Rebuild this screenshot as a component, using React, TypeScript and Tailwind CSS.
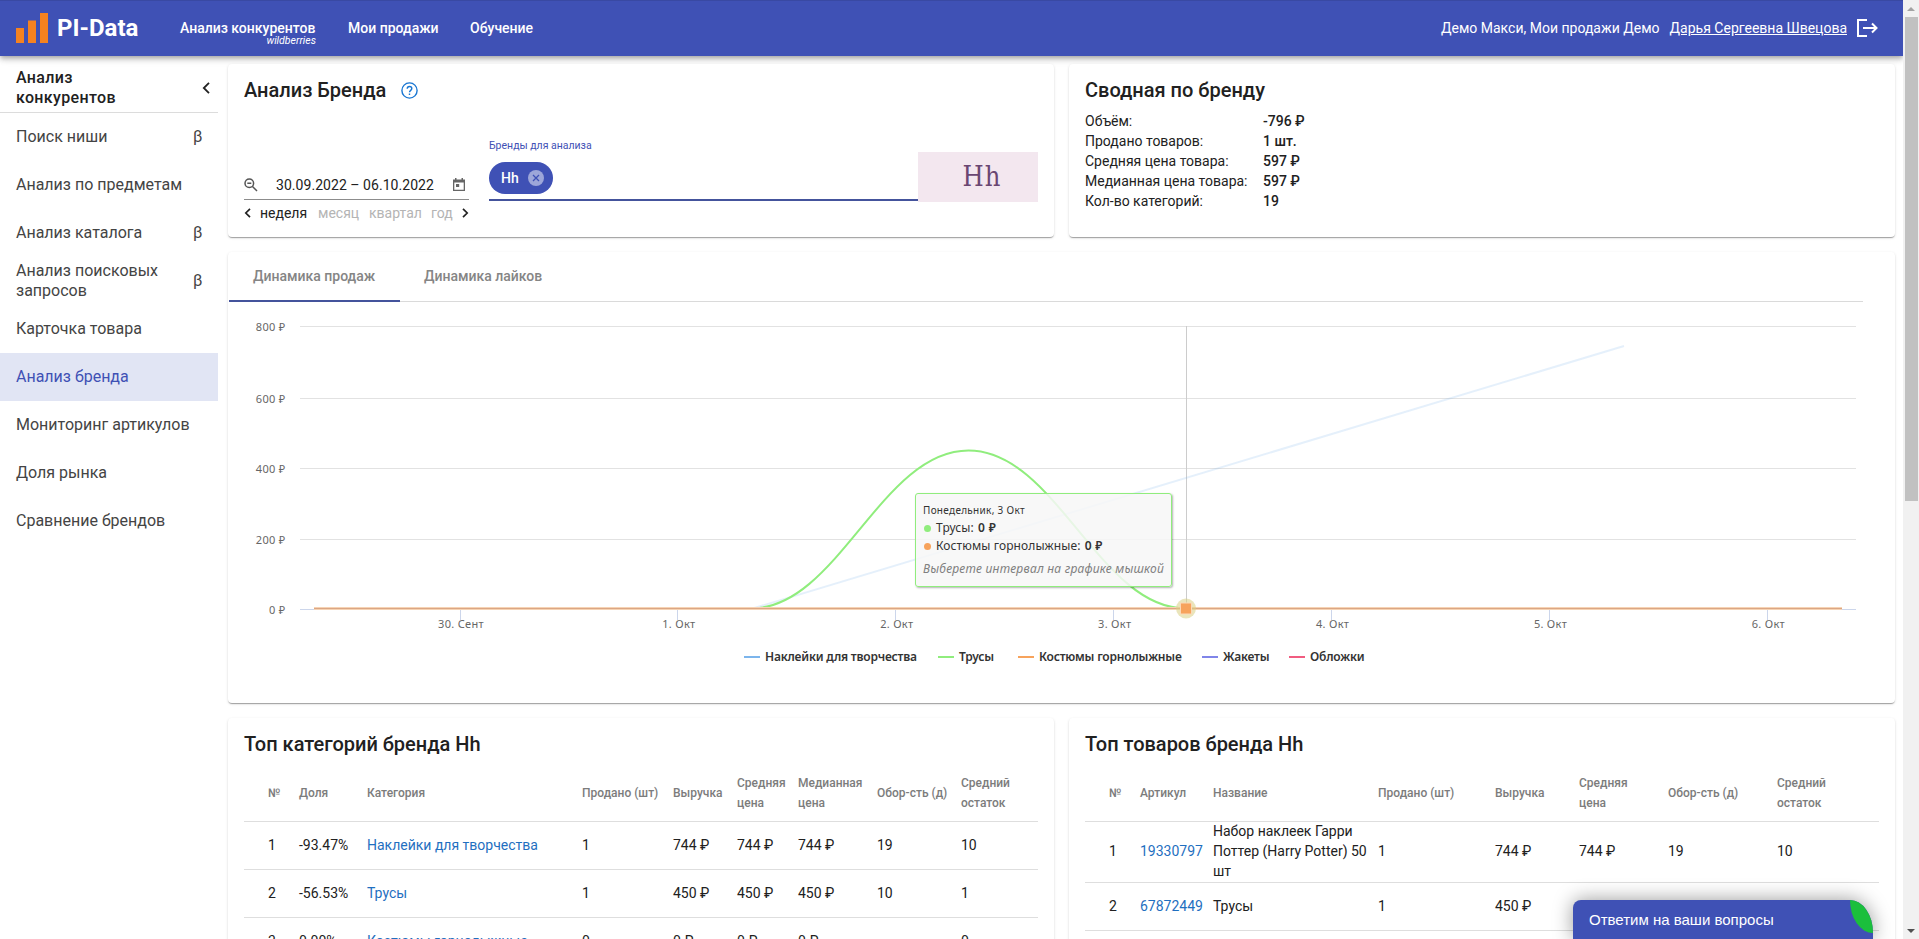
import React from "react";

const menu = [
  { title: "Поиск ниши", beta: true },
  { title: "Анализ по предметам" },
  { title: "Анализ каталога", beta: true },
  { title: "Анализ поисковых запросов", beta: true },
  { title: "Карточка товара" },
  { title: "Анализ бренда", active: true },
  { title: "Мониторинг артикулов" },
  { title: "Доля рынка" },
  { title: "Сравнение брендов" },
];

const summary = [
  ["Объём:", "-796 ₽"],
  ["Продано товаров:", "1 шт."],
  ["Средняя цена товара:", "597 ₽"],
  ["Медианная цена товара:", "597 ₽"],
  ["Кол-во категорий:", "19"],
];

const categoryHead = ["№", "Доля", "Категория", "Продано (шт)", "Выручка", "Средняя цена", "Медианная цена", "Обор-сть (д)", "Средний остаток"];
const categories = [
  ["1", "-93.47%", "Наклейки для творчества", "1", "744 ₽", "744 ₽", "744 ₽", "19", "10"],
  ["2", "-56.53%", "Трусы", "1", "450 ₽", "450 ₽", "450 ₽", "10", "1"],
  ["3", "0.00%", "Костюмы горнолыжные", "0", "0 ₽", "0 ₽", "0 ₽", "", "0"],
];

const goodsHead = ["№", "Артикул", "Название", "Продано (шт)", "Выручка", "Средняя цена", "Обор-сть (д)", "Средний остаток"];
const goods = [
  ["1", "19330797", "Набор наклеек Гарри Поттер (Harry Potter) 50 шт", "1", "744 ₽", "744 ₽", "19", "10"],
  ["2", "67872449", "Трусы", "1", "450 ₽", "", "", ""],
];

const legend = [
  { name: "Наклейки для творчества", color: "bg-[#7cb5ec]", width: "w-[194px]" },
  { name: "Трусы", color: "bg-[#90ed7d]", width: "w-[80px]" },
  { name: "Костюмы горнолыжные", color: "bg-[#f7a35c]", width: "w-[184px]" },
  { name: "Жакеты", color: "bg-[#8085e9]", width: "w-[87px]" },
  { name: "Обложки", color: "bg-[#f15c80]", width: "w-[76px]" },
];

const card =
  "bg-white rounded shadow-[0_2px_1px_-1px_rgba(0,0,0,0.2),0_1px_1px_0_rgba(0,0,0,0.14),0_1px_3px_0_rgba(0,0,0,0.12)]";

const Header = () => {
  return (
    <header className="flex h-14 items-center border-t border-[#3949a3] bg-[#3f51b5] pb-[2px] pl-4 pr-[25px] text-white shadow-[0_2px_4px_-1px_rgba(0,0,0,0.2),0_4px_5px_0_rgba(0,0,0,0.14),0_1px_10px_0_rgba(0,0,0,0.12)]">
      <svg width="32" height="30" viewBox="0 0 32 30" fill="#f58220">
        <path d="M0 15h8v15H0zM12 7.500h8V30h-8zM24 0h8v30h-8z" />
      </svg>
      <span className="ml-[9px] w-[123px] text-2xl font-bold">PI-Data</span>
      <nav className="flex text-sm font-medium">
        <a className="relative w-[168px] whitespace-nowrap">
          Анализ конкурентов
          <span className="absolute right-[32px] top-[15px] text-[10.5px] font-normal italic leading-4">wildberries</span>
        </a>
        <a className="w-[122px]">Мои продажи</a>
        <a>Обучение</a>
      </nav>
      <div className="ml-auto flex items-center text-sm">
        <span className="mr-[10px]">Демо Макси, Мои продажи Демо</span>
        <a className="mr-[10px] underline">Дарья Сергеевна Швецова</a>
        <svg width="21" height="18" viewBox="0 0 21 18" fill="none" stroke="#fff" strokeWidth="2">
          <path d="M10 1H1v16h9M6 9h13M15 4.500 19.500 9 15 13.500" />
        </svg>
      </div>
    </header>
  );
};

const Sidebar = () => {
  return (
    <aside className="w-[218px] shrink-0">
      <div className="flex h-[57px] items-center justify-between border-b border-[#dcdcdc] pl-4 pr-2 pt-[7px]">
        <h2 className="w-[120px] text-base font-medium leading-5 tracking-[0.35px]">Анализ конкурентов</h2>
        <svg width="8" height="12" viewBox="0 0 8 12" fill="none" stroke="#222" strokeWidth="1.800">
          <path d="M7 .8 1.800 6 7 11.200" />
        </svg>
      </div>
      {menu.map((item) => (
        <div
          key={item.title}
          className={
            item.active
              ? "flex h-12 items-center justify-between bg-[#e1e5f4] px-4 text-[#3f51b5]"
              : "flex h-12 items-center justify-between px-4 text-[#444]"
          }
        >
          <span className="text-base leading-5">{item.title}</span>
          {item.beta && <span className="w-[9px] text-base">β</span>}
        </div>
      ))}
    </aside>
  );
};

const Filters = () => {
  return (
    <section className={card + " h-[173px] w-[826px] px-4"}>
      <div className="flex h-[52px] items-center">
        <h1 className="w-[157px] whitespace-nowrap text-xl font-medium">Анализ Бренда</h1>
        <svg width="17" height="17" viewBox="0 0 17 17" fill="none" stroke="#1976d2" strokeWidth="1.400">
          <circle cx="8.500" cy="8.500" r="7.600" />
          <path d="M6.200 6.800C6.200 5.300 7.200 4.500 8.500 4.500s2.300.9 2.300 2.100c0 1.700-2.300 1.800-2.300 3.700M8.500 11.600v1.500" />
        </svg>
      </div>
      <div className="flex">
        <div className="mt-[54px] w-[225px]">
          <div className="flex h-[30px] items-center border-b border-[#8c8c8c]">
            <svg width="14" height="14" viewBox="0 0 14 14" fill="none" stroke="#555" strokeWidth="1.500">
              <circle cx="5.300" cy="5.300" r="4.300" />
              <path d="M8.500 8.500 13 13M3.300 5.300h4" />
            </svg>
            <span className="ml-[18px] w-[177px] text-sm tracking-[0.05px]">30.09.2022 – 06.10.2022</span>
            <svg width="12" height="13" viewBox="0 0 12 13" fill="#666">
              <path fillRule="evenodd" d="M2 0h1.500v1.500h5V0H10v1.500h2V13H0V1.500h2zM1.300 4.500v7.200h9.400V4.500z" />
              <path d="M3 6h3.200v3H3z" />
            </svg>
          </div>
          <div className="mt-[3px] flex h-5 items-center text-sm text-[#b4b4b4]">
            <svg width="7" height="10" viewBox="0 0 7 10" fill="none" stroke="#222" strokeWidth="1.700">
              <path d="M6 .8 1.800 5 6 9.200" />
            </svg>
            <span className="ml-[9px] w-[58px] text-[#222]">неделя</span>
            <span className="w-[51px]">месяц</span>
            <span className="w-[62px]">квартал</span>
            <span className="w-[31px]">год</span>
            <svg width="7" height="10" viewBox="0 0 7 10" fill="none" stroke="#222" strokeWidth="1.700">
              <path d="M1 .8 5.200 5 1 9.200" />
            </svg>
          </div>
        </div>
        <div className="ml-5 mt-[20px] h-[65px] w-[429px] border-b-2 border-[#44539c]">
          <label className="block h-[26px] text-[10.5px] leading-5 text-[#3f51b5]">Бренды для анализа</label>
          <div className="flex h-8 w-16 items-center justify-between rounded-full bg-[#3f51b5] pl-3 pr-[9px] text-sm font-medium text-white">
            Hh
            <svg width="16" height="16" viewBox="0 0 16 16">
              <circle cx="8" cy="8" r="8" fill="#9da6d9" />
              <path d="m5 5 6 6M11 5l-6 6" stroke="#3f51b5" strokeWidth="1.300" />
            </svg>
          </div>
        </div>
        <div className="mt-9 flex h-[50px] w-[120px] items-center justify-center bg-[#f3e7ef] pl-[8px] pt-px font-['DejaVu_Serif_Condensed','DejaVu_Serif',serif] text-[27px] tracking-[1px] text-[#6a4672]">
          <span>Hh</span>
        </div>
      </div>
    </section>
  );
};

const Summary = () => {
  return (
    <section className={card + " h-[173px] w-[826px] px-4"}>
      <h2 className="flex h-[47px] items-center pt-[5px] text-xl font-medium">Сводная по бренду</h2>
      {summary.map(([name, value]) => (
        <div key={name} className="flex text-sm leading-5">
          <span className="w-[178px]">{name}</span>
          <b className="font-medium">{value}</b>
        </div>
      ))}
    </section>
  );
};

const gridLines = [74.5, 146.5, 216.5, 287.5, 357.5];
const days = ["30. Сент", "1. Окт", "2. Окт", "3. Окт", "4. Окт", "5. Окт", "6. Окт"];

const Chart = () => {
  return (
    <section className={card + " relative h-[451px] w-[1667px]"}>
      <div className="ml-px flex h-[50px] w-[1634px] border-b border-[#dadada] text-sm font-medium text-[#858585]">
        <div className="-mb-px w-[171px] border-b-2 border-[#44539c] pl-6 leading-[48px]">Динамика продаж</div>
        <div className="pl-6 leading-[48px]">Динамика лайков</div>
      </div>
      {/* svg is drawn in the card's own coordinates */}
      <svg
        width="1667"
        height="400"
        viewBox="0 50 1667 400"
        className="block font-['Noto_Sans',sans-serif] text-[11px] tracking-[0.3px]"
        fill="none"
      >
        {gridLines.map((y, i) => (
          <g key={y}>
            <path d={`M72 ${y}H1628`} stroke={i === 4 ? "#ccd6eb" : "#e2e2e2"} />
            <text x="57.500" y={y + 4} textAnchor="end" fill="#666">
              {800 - i * 200} ₽
            </text>
          </g>
        ))}
        {days.map((day, i) => (
          <g key={day}>
            <path d={`M${Math.round(231.5 + i * 217.9) + 0.5} 358v10`} stroke="#ccd6eb" />
            <text x={233 + i * 217.9} y="376" textAnchor="middle" fill="#666">
              {day}
            </text>
          </g>
        ))}
        <path d="M958.500 74v284" stroke="#ccc" />
        <path d="M523 357 1396 94" stroke="#7cb5ec" strokeWidth="2" opacity="0.200" />
        <path d="M523 356.500C610 356.500 653 198.500 740.500 198.500S871 356.500 958 356.500" stroke="#90ed7d" strokeWidth="2" />
        <path d="M86 356.500h1528" stroke="#f6d3b3" strokeWidth="3" />
        <path d="M86 356.500h1528" stroke="#dba684" />
        <circle cx="958" cy="356.500" r="10" fill="#d8cf83" opacity="0.550" />
        <path d="M952.500 351h11v11h-11z" fill="#f7a35c" stroke="#fbd9b8" />
      </svg>
      <div className="absolute left-[687px] top-[241px] h-[94px] w-[257px] whitespace-nowrap rounded-[3px] border-[1.500px] border-[#90ed7d] bg-[#f7f7f7]/85 pl-[7px] pt-[7px] font-['Noto_Sans',sans-serif] text-xs leading-[18px] tracking-[0.1px] text-[#333] shadow-[1px_1px_2px_rgba(0,0,0,0.3)]">
        <p className="text-[10px] tracking-[0.3px]">Понедельник, 3 Окт</p>
        <p className="flex items-center">
          <i className="ml-px mr-[5px] size-[7px] rounded-full bg-[#90ed7d]" />
          Трусы:&nbsp;<b className="ml-px font-semibold tracking-[0.3px]">0 ₽</b>
        </p>
        <p className="flex items-center">
          <i className="ml-px mr-[5px] size-[7px] rounded-full bg-[#f7a35c]" />
          Костюмы горнолыжные:&nbsp;<b className="ml-px font-semibold tracking-[0.3px]">0 ₽</b>
        </p>
        <p className="mt-[5px] italic tracking-[0.22px] text-[#808080]">Выберете интервал на графике мышкой</p>
      </div>
      <div className="absolute left-[516px] top-[396px] flex font-['Noto_Sans',sans-serif] text-xs font-semibold leading-[18px] tracking-[-0.2px] text-[#333]">
        {legend.map((item) => (
          <div key={item.name} className={item.width + " flex items-center whitespace-nowrap"}>
            <i className={item.color + " mr-[5px] h-[2px] w-4 shrink-0"} />
            {item.name}
          </div>
        ))}
      </div>
    </section>
  );
};

type TableProps = { title: string; head: string[]; rows: string[][]; cols: string; link: number };

const Table = ({ title, head, rows, cols, link }: TableProps) => {
  return (
    <section className={card + " h-[260px] w-[826px] px-4"}>
      <h2 className="flex h-[52px] items-center text-xl font-medium">{title}</h2>
      <div className={cols + " grid h-[52px] items-center border-b border-[#dedede] pb-[6px] pl-6 text-xs font-medium leading-5 text-[#7c7c7c]"}>
        {head.map((name) => (
          <span key={name} className="max-w-[78px]">
            {name}
          </span>
        ))}
      </div>
      {rows.map((row) => (
        <div key={row[0]} className={cols + " grid min-h-12 items-center border-b border-[#dedede] pl-6 text-sm leading-5"}>
          {row.map((cell, i) => (
            <span key={i} className={i === link ? "-mt-px mb-px text-[#1f6fc0]" : "-mt-px mb-px"}>
              {cell}
            </span>
          ))}
        </div>
      ))}
    </section>
  );
};

const Scrollbar = () => {
  return (
    <div className="flex h-full w-4 flex-col items-center justify-between bg-[#f1f1f1]">
      <svg width="16" height="17" viewBox="0 0 16 17" fill="#a3a3a3">
        <path d="M4 11h8L8 7z" />
      </svg>
      <div className="mb-auto h-[484px] w-[13px] bg-[#c1c1c1]" />
      <svg width="16" height="17" viewBox="0 0 16 17" fill="#505050">
        <path d="M4 7h8l-4 4z" />
      </svg>
    </div>
  );
};

const App = () => {
  return (
    <div className="flex h-[939px] w-[1919px] overflow-hidden bg-white font-[Roboto,sans-serif] text-[#212121]">
      <div className="relative h-full w-[1903px] overflow-hidden">
        <Header />
        <div className="flex">
          <Sidebar />
          <main className="relative ml-[10px] mt-2 flex w-[1667px] flex-wrap gap-[15px]">
            <Filters />
            <Summary />
            <Chart />
            <Table
              title="Топ категорий бренда Hh"
              head={categoryHead}
              rows={categories}
              cols="grid-cols-[31px_68px_215px_91px_64px_61px_79px_84px_60px]"
              link={2}
            />
            <Table
              title="Топ товаров бренда Hh"
              head={goodsHead}
              rows={goods}
              cols="grid-cols-[31px_73px_165px_117px_84px_89px_109px_60px]"
              link={1}
            />
          </main>
        </div>
        <div className="absolute bottom-0 right-[30px] h-[39px] w-[300px] rounded-tl-lg rounded-tr-[23px_33px] bg-[#3f51b5] pl-4 font-['Liberation_Sans',sans-serif] text-[15px] leading-[39px] text-white shadow-[0_0_20px_rgba(0,0,0,0.4)]">
          Ответим на ваши вопросы
          <svg width="23" height="33" viewBox="0 0 23 33" className="absolute right-0 top-0" fill="#1bbf3c">
            <path d="M0 0A23 33 0 0 1 23 33 23 33 0 0 1 0 0z" />
          </svg>
        </div>
      </div>
      <Scrollbar />
    </div>
  );
};

export default App;
